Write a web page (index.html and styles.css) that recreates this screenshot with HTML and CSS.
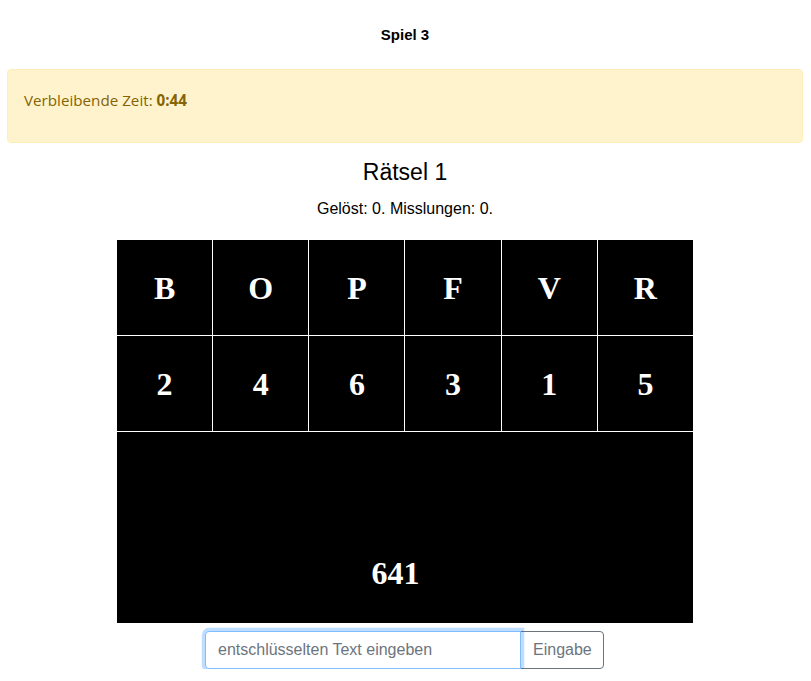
FILE: index.html
```html
<!DOCTYPE html>
<html lang="de">
<head>
<meta charset="utf-8">
<title>Spiel 3</title>
<link rel="stylesheet" href="styles.css">
</head>
<body>
<div class="page">
  <h1 class="title">Spiel 3</h1>
  <div class="alert">Verbleibende Zeit: <strong>0:44</strong></div>
  <h2 class="puzzle">Rätsel 1</h2>
  <p class="stats">Gelöst: 0. Misslungen: 0.</p>
  <div class="board">
    <div class="cell">B</div>
    <div class="cell">O</div>
    <div class="cell">P</div>
    <div class="cell">F</div>
    <div class="cell">V</div>
    <div class="cell">R</div>
    <div class="cell">2</div>
    <div class="cell">4</div>
    <div class="cell">6</div>
    <div class="cell">3</div>
    <div class="cell">1</div>
    <div class="cell">5</div>
    <div class="cell code">641</div>
  </div>
  <form class="entry" onsubmit="return false">
    <input class="entry-input" type="text" placeholder="entschlüsselten Text eingeben" autofocus>
    <button class="entry-btn" type="submit">Eingabe</button>
  </form>
</div>
</body>
</html>
```
FILE: styles.css
```css
html, body {
  margin: 0;
  padding: 0;
  background: #fff;
}
body {
  font-family: "Liberation Sans", Arial, sans-serif;
  color: #000;
}
.page {
  display: flex;
  flex-direction: column;
  align-items: center;
  padding: 26px 8px 0 7px;
}
.title {
  margin: 0;
  font-size: 15px;
  line-height: 18px;
  font-weight: bold;
}
.alert {
  align-self: stretch;
  margin-top: 25px;
  height: 74px;
  box-sizing: border-box;
  padding: 18px 16px 0 16px;
  background: #fff3cd;
  border: 1px solid #ffeeba;
  border-radius: 4px;
  color: #856404;
  font-family: "Segoe UI", "Open Sans", sans-serif;
  font-size: 15.2px;
  line-height: 24px;
}
.alert strong {
  font-weight: bold;
}
.puzzle {
  margin: 16px 0 0;
  font-size: 23px;
  line-height: 27px;
  font-weight: normal;
}
.stats {
  margin: 13px 0 0;
  font-size: 16px;
  line-height: 19.2px;
}
.board {
  margin-top: 22px;
  width: 576px;
  display: grid;
  grid-template-columns: repeat(6, 1fr);
  grid-template-rows: 95px 95px 191px;
  gap: 1px;
  background: #fff;
}
.cell {
  background: #000;
  color: #fff;
  font-family: "Liberation Serif", "Times New Roman", serif;
  font-weight: bold;
  font-size: 32px;
  line-height: 36px;
  display: flex;
  align-items: center;
  justify-content: center;
}
.cell.code {
  grid-column: 1 / -1;
  align-items: flex-end;
  padding: 0 19px 32px 0;
}
.entry {
  margin: 8px 0 0;
  display: flex;
  width: 400px;
}
.entry-input {
  width: 316px;
  height: 38px;
  box-sizing: border-box;
  margin: 0;
  padding: 6px 12px;
  font-family: "Liberation Sans", Arial, sans-serif;
  font-size: 16px;
  color: #495057;
  background: #fff;
  border: 1px solid #80bdff;
  border-radius: 4px 0 0 4px;
  box-shadow: 0 0 0 3.2px rgba(0, 123, 255, 0.25);
  outline: none;
  position: relative;
  z-index: 1;
}
.entry-input::placeholder {
  color: #6c757d;
  opacity: 1;
}
.entry-btn {
  width: 84px;
  height: 38px;
  box-sizing: border-box;
  margin: 0 0 0 -1px;
  padding: 6px 12px;
  font-family: "Liberation Sans", Arial, sans-serif;
  font-size: 16px;
  color: #6c757d;
  background: #fff;
  border: 1px solid #6c757d;
  border-radius: 0 4px 4px 0;
}
```
